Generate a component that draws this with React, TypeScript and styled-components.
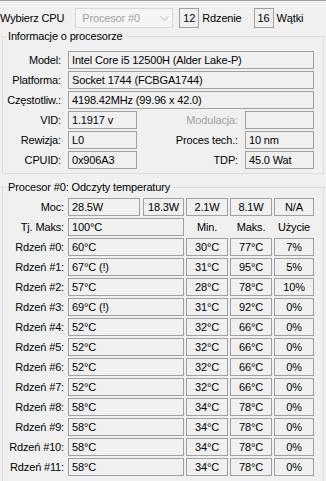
import React from 'react';
import styled, { createGlobalStyle } from 'styled-components';

const GlobalStyle = createGlobalStyle`
  html, body {
    margin: 0;
    padding: 0;
    background: #f0f0f0;
  }
  body {
    font-family: 'Liberation Sans', Arial, sans-serif;
    font-size: 11px;
    letter-spacing: -0.15px;
    color: #000;
  }
`;

const cores = [
  { temp: '60°C', min: '30°C', max: '77°C', load: '7%' },
  { temp: '67°C (!)', min: '31°C', max: '95°C', load: '5%' },
  { temp: '57°C', min: '28°C', max: '78°C', load: '10%' },
  { temp: '69°C (!)', min: '31°C', max: '92°C', load: '0%' },
  { temp: '52°C', min: '32°C', max: '66°C', load: '0%' },
  { temp: '52°C', min: '32°C', max: '66°C', load: '0%' },
  { temp: '52°C', min: '32°C', max: '66°C', load: '0%' },
  { temp: '52°C', min: '32°C', max: '66°C', load: '0%' },
  { temp: '58°C', min: '34°C', max: '78°C', load: '0%' },
  { temp: '58°C', min: '34°C', max: '78°C', load: '0%' },
  { temp: '58°C', min: '34°C', max: '78°C', load: '0%' },
  { temp: '58°C', min: '34°C', max: '78°C', load: '0%' },
];

const App = () => {
  return (
    <Window>
      <GlobalStyle />
      <TopBar>
        <TopLabel>Wybierz CPU</TopLabel>
        <Combo>
          <span>Procesor #0</span>
          <svg width="9" height="5" viewBox="0 0 9 5">
            <polyline points="0.5,0.5 4.5,4.5 8.5,0.5" fill="none" stroke="#b8b8b8" strokeWidth="1" />
          </svg>
        </Combo>
        <CountBox>12</CountBox>
        <TopLabel>Rdzenie</TopLabel>
        <CountBox $gap>16</CountBox>
        <TopLabel>Wątki</TopLabel>
      </TopBar>

      <Group $height={138}>
        <GroupTitle>Informacje o procesorze</GroupTitle>
        <InfoRows>
          <Label>Model:</Label>
          <Field $wide>Intel Core i5 12500H (Alder Lake-P)</Field>
          <Label>Platforma:</Label>
          <Field $wide>Socket 1744 (FCBGA1744)</Field>
          <Label>Częstotliw.:</Label>
          <Field $wide>4198.42MHz (99.96 x 42.0)</Field>
          <Label>VID:</Label>
          <Field>1.1917 v</Field>
          <Label $disabled>Modulacja:</Label>
          <Field />
          <Label>Rewizja:</Label>
          <Field>L0</Field>
          <Label>Proces tech.:</Label>
          <Field>10 nm</Field>
          <Label>CPUID:</Label>
          <Field>0x906A3</Field>
          <Label>TDP:</Label>
          <Field>45.0 Wat</Field>
        </InfoRows>
      </Group>

      <Group $top={13}>
        <GroupTitle $after={4}>Procesor #0: Odczyty temperatury</GroupTitle>
        <TempRows>
          <Label>Moc:</Label>
          <Split>
            <Field>28.5W</Field>
            <Field $center>18.3W</Field>
          </Split>
          <Field $center>2.1W</Field>
          <Field $center>8.1W</Field>
          <Field $center>N/A</Field>

          <Label>Tj. Maks:</Label>
          <Field>100°C</Field>
          <Heading>Min.</Heading>
          <Heading>Maks.</Heading>
          <Heading>Użycie</Heading>

          {cores.map((c, i) => (
            <React.Fragment key={i}>
              <Label>Rdzeń #{i}:</Label>
              <Field>{c.temp}</Field>
              <Field $center>{c.min}</Field>
              <Field $center>{c.max}</Field>
              <Field $center>{c.load}</Field>
            </React.Fragment>
          ))}
        </TempRows>
      </Group>
    </Window>
  );
};

export default App;

const Window = styled.div`
  width: 326px;
  height: 481px;
  overflow: hidden;
  box-sizing: border-box;
  border-top: 1px solid #a0a0a0;
`;

const TopBar = styled.div`
  display: flex;
  align-items: center;
  height: 35px;
  padding-top: 7px;
  padding-bottom: 8px;
  box-sizing: border-box;
`;

const TopLabel = styled.span`
  line-height: 20px;
  white-space: nowrap;
`;

const Combo = styled.div`
  display: flex;
  align-items: center;
  justify-content: space-between;
  width: 98px;
  height: 20px;
  margin-left: 11px;
  padding: 0 3px 0 6px;
  box-sizing: border-box;
  border: 1px solid #d9d9d9;
  background: #f5f5f5;
  color: #a3a3a3;
`;

const CountBox = styled.div<{ $gap?: boolean }>`
  width: 20px;
  height: 20px;
  margin-left: ${({ $gap }) => ($gap ? '12px' : '6px')};
  margin-right: 3px;
  box-sizing: border-box;
  border: 1px solid #a0a0a0;
  text-align: center;
  line-height: 18px;
`;

const Group = styled.div<{ $height?: number; $top?: number }>`
  margin: ${({ $top }) => $top ?? 0}px 2px 0 2px;
  ${({ $height }) => ($height ? `height: ${$height}px;` : 'height: 300px;')}
  box-sizing: border-box;
  border: 1px solid #dcdcdc;
`;

const GroupTitle = styled.div<{ $after?: number }>`
  display: table;
  margin: -7px 0 ${({ $after }) => $after ?? 8}px 3px;
  padding: 0 2px;
  line-height: 13px;
  background: #f0f0f0;
  white-space: nowrap;
`;

const InfoRows = styled.div`
  display: grid;
  grid-template-columns: 60px 69px 1fr 69px;
  grid-auto-rows: 18px;
  column-gap: 5px;
  row-gap: 2px;
  padding-right: 9px;
`;

const TempRows = styled.div`
  display: grid;
  grid-template-columns: 63px 116px 42px 42px 40px;
  grid-auto-rows: 18px;
  column-gap: 2px;
  row-gap: 2px;
`;

const Label = styled.div<{ $disabled?: boolean }>`
  text-align: right;
  line-height: 18px;
  padding-right: 2px;
  white-space: nowrap;
  color: ${({ $disabled }) => ($disabled ? '#a0a0a0' : '#000')};
`;

const Heading = styled.div`
  text-align: center;
  line-height: 18px;
`;

const Field = styled.div<{ $wide?: boolean; $center?: boolean }>`
  ${({ $wide }) => ($wide ? 'grid-column: 2 / -1;' : '')}
  box-sizing: border-box;
  height: 18px;
  border: 1px solid #a0a0a0;
  padding: 0 3px;
  line-height: 16px;
  white-space: nowrap;
  overflow: hidden;
  text-align: ${({ $center }) => ($center ? 'center' : 'left')};
`;

const Split = styled.div`
  display: flex;
  gap: 3px;
  & > :first-child {
    flex: 1;
  }
  & > :last-child {
    width: 41px;
  }
`;
